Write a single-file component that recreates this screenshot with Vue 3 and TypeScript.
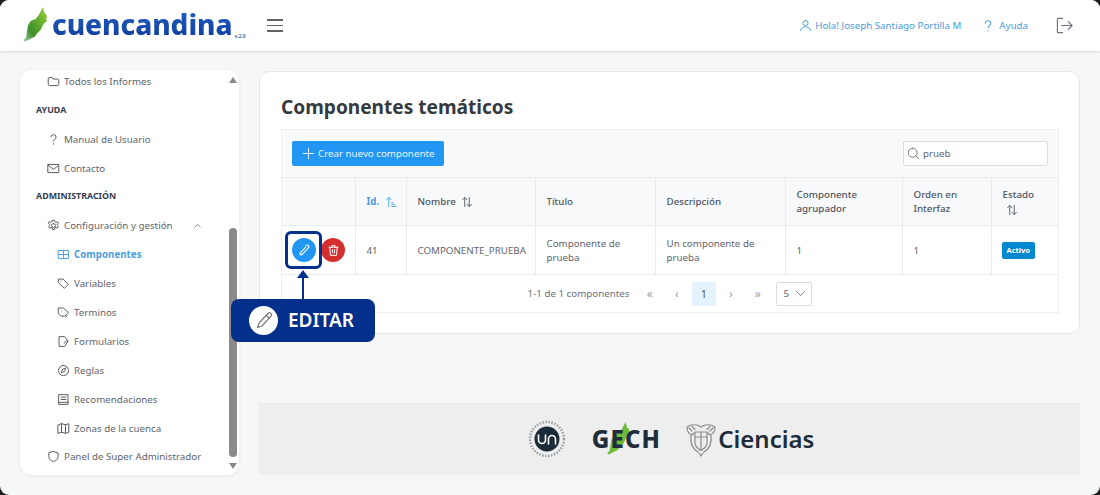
<script setup lang="ts">
const icons: Record<string, string> = {
  folder: 'M1.500 4.500a1.500 1.500 0 0 1 1.500-1.500h3l1.500 2h5.500a1.500 1.500 0 0 1 1.500 1.500v5a1.500 1.500 0 0 1-1.500 1.500H3a1.500 1.500 0 0 1-1.500-1.500z',
  question: 'M4.800 4.800A3.200 3.200 0 0 1 8 2a3.100 3.100 0 0 1 3.200 3c0 2.400-3.200 2.600-3.200 5M8 13.200v.6',
  mail: 'M1.500 3h13v10h-13zM1.500 4l6.500 5 6.500-5',
  gear: 'M8 5.600a2.400 2.400 0 1 0 0 4.800 2.400 2.400 0 0 0 0-4.800zM6.800 1.600h2.400l.4 1.800 1.500.7 1.600-.9 1.300 1.900-1.200 1.300v1.600l1.200 1.300-1.300 1.900-1.600-.9-1.500.7-.4 1.800H6.800l-.4-1.800-1.500-.7-1.600.9-1.300-1.900 1.200-1.300V6.400L1.500 5.100l1.300-1.900 1.600.9 1.500-.7z',
  table: 'M2 3h12v10H2zM2 8h12M8 3v10',
  tag: 'M2 2.500h5.500l6.500 6.500-5 5-6.500-6.500zM5 5v.01',
  tags: 'M2 2.500h6l6 5.500-4.500 4.500H5.500a2 2 0 0 1-1.400-.6L2 9.500zM5.500 6v.01M12 12l-1 1.500',
  form: 'M3 2h6.500l4 5.500-4 6.500H3zM13 7.500c-2.500-.5-3.500.5-4 2.500',
  compass: 'M8 1.800a6.200 6.200 0 1 0 0 12.400A6.200 6.200 0 0 0 8 1.800zM10.800 5.200L9.200 9.200 5.200 10.800 6.800 6.800z',
  book: 'M2.500 2h11v12h-11zM2.500 11.500h11M5 5h6M5 8h6',
  map: 'M1.500 3.500L5.500 2l5 1.500 4-1.500v10.500l-4 1.500-5-1.500-4 1.500zM5.500 2v10.500M10.500 3.500V14',
  shield: 'M8 1.800l5.700 2v4.200c0 3.200-2.500 5.200-5.700 6.200-3.200-1-5.700-3-5.700-6.200V3.800z',
}

const navItems = [
  { label: 'Todos los Informes', icon: 'folder', kind: 'item' },
  { label: 'AYUDA', icon: '', kind: 'section' },
  { label: 'Manual de Usuario', icon: 'question', kind: 'item' },
  { label: 'Contacto', icon: 'mail', kind: 'item' },
  { label: 'ADMINISTRACIÓN', icon: '', kind: 'section' },
  { label: 'Configuración y gestión', icon: 'gear', kind: 'group' },
  { label: 'Componentes', icon: 'table', kind: 'sub active' },
  { label: 'Variables', icon: 'tag', kind: 'sub' },
  { label: 'Terminos', icon: 'tags', kind: 'sub' },
  { label: 'Formularios', icon: 'form', kind: 'sub' },
  { label: 'Reglas', icon: 'compass', kind: 'sub' },
  { label: 'Recomendaciones', icon: 'book', kind: 'sub' },
  { label: 'Zonas de la cuenca', icon: 'map', kind: 'sub' },
  { label: 'Panel de Super Administrador', icon: 'shield', kind: 'item' },
]
</script>

<template>
  <div class="page">
    <header class="topbar">
      <div class="logo">
        <svg class="leaf" width="26" height="36" viewBox="0 0 26 36">
          <defs>
            <linearGradient id="leafg" x1="0" y1="1" x2="1" y2="0">
              <stop offset="0" stop-color="#9fd0b0" />
              <stop offset="0.3" stop-color="#3f8f2a" />
              <stop offset="0.7" stop-color="#6fb52f" />
              <stop offset="1" stop-color="#a2cf4a" />
            </linearGradient>
          </defs>
          <path d="M20 0l1.500 6 2 1.500.5 3-1 1.500 1 2-3.500 3-3 6-3.500 3.500-2 3-5 2.500-5 2.500-1.500-1.500 2.500-2.500 1-6 1-6 2.500-4.500 5-2 3-3.500z" fill="url(#leafg)" />
        </svg>
        <span class="logo-text">cuencandina</span>
        <span class="logo-ver">v.2.0</span>
      </div>
      <button class="burger" aria-label="menu"><i></i><i></i><i></i></button>
      <div class="top-links">
        <a class="top-link">
          <svg width="13" height="13" viewBox="0 0 16 16"><path d="M8 1.800a3.200 3.200 0 1 0 0 6.400 3.200 3.200 0 0 0 0-6.400zM1.800 14.200c.5-3 3-4.500 6.200-4.500s5.700 1.500 6.200 4.500" /></svg>
          Hola! Joseph Santiago Portilla M
        </a>
        <a class="top-link help">
          <svg width="14" height="14" viewBox="0 0 16 16"><path :d="icons.question" /></svg>
          Ayuda
        </a>
        <svg class="logout" width="19" height="19" viewBox="0 0 20 20"><path d="M8 2.500H3.500a1 1 0 0 0-1 1v13a1 1 0 0 0 1 1H8M7 10h11M14 6l4 4-4 4" /></svg>
      </div>
    </header>

    <div class="body">
      <aside class="sidebar">
        <div v-for="n in navItems" :key="n.label" class="nav" :class="n.kind">
          <svg v-if="n.icon" width="13" height="13" viewBox="0 0 16 16"><path :d="icons[n.icon]" /></svg>
          <span>{{ n.label }}</span>
          <svg v-if="n.kind === 'group'" class="chev" width="9" height="9" viewBox="0 0 16 16"><path d="M3 11l5-5 5 5" /></svg>
        </div>
        <div class="scroll">
          <i class="up"></i>
          <i class="thumb"></i>
          <i class="down"></i>
        </div>
      </aside>

      <main class="main">
        <section class="card">
          <h1>Componentes temáticos</h1>
          <div class="tbl">
            <div class="toolbar">
              <button class="create">
                <svg width="13" height="13" viewBox="0 0 16 16"><path d="M8 1.500v13M1.500 8h13" /></svg>
                Crear nuevo componente
              </button>
              <div class="search">
                <svg width="13" height="13" viewBox="0 0 16 16"><path d="M7 1.500a5.500 5.500 0 1 0 0 11 5.500 5.500 0 0 0 0-11zM11 11l3.500 3.500" /></svg>
                <span>prueb</span>
              </div>
            </div>
            <table>
              <colgroup>
                <col style="width:73px" /><col style="width:51px" /><col style="width:129px" /><col style="width:120px" />
                <col style="width:130px" /><col style="width:117px" /><col style="width:89px" /><col style="width:67px" />
              </colgroup>
              <thead>
                <tr>
                  <th></th>
                  <th class="sorted">Id. <svg class="sort" width="12" height="12" viewBox="0 0 16 16"><path d="M5 14V2M2 5l3-3 3 3M9 9h2M9 11.500h4M9 14h6" /></svg></th>
                  <th>Nombre <svg class="sort" width="12" height="12" viewBox="0 0 16 16"><path d="M5 14V2M2 5l3-3 3 3M11 2v12M8 11l3 3 3-3" /></svg></th>
                  <th>Título</th>
                  <th>Descripción</th>
                  <th>Componente agrupador</th>
                  <th>Orden en Interfaz</th>
                  <th>Estado <svg class="sort block" width="12" height="12" viewBox="0 0 16 16"><path d="M5 14V2M2 5l3-3 3 3M11 2v12M8 11l3 3 3-3" /></svg></th>
                </tr>
              </thead>
              <tbody>
                <tr>
                  <td class="actions">
                    <span class="round edit">
                      <svg width="14" height="14" viewBox="0 0 16 16"><path d="M10.200 2.800a2 2 0 0 1 3 2.600l-7.200 7.600a1.400 1.400 0 0 1-2.200-1.800l6.400-6.800" /></svg>
                    </span>
                    <span class="round del">
                      <svg width="13" height="13" viewBox="0 0 16 16"><path d="M2.500 4h11M6 4V2h4v2M3.500 4l.7 10h7.600l.7-10M6.700 7v4M9.300 7v4" /></svg>
                    </span>
                  </td>
                  <td>41</td>
                  <td>COMPONENTE_PRUEBA</td>
                  <td>Componente de prueba</td>
                  <td>Un componente de prueba</td>
                  <td>1</td>
                  <td>1</td>
                  <td><span class="badge">Activo</span></td>
                </tr>
              </tbody>
            </table>
            <div class="pager">
              <span class="count">1-1 de 1 componentes</span>
              <span class="pg">«</span>
              <span class="pg">‹</span>
              <span class="pg current">1</span>
              <span class="pg">›</span>
              <span class="pg">»</span>
              <span class="size">5
                <svg width="11" height="11" viewBox="0 0 16 16"><path d="M2 5l6 6 6-6" /></svg>
              </span>
            </div>
          </div>
        </section>

        <footer class="foot">
          <div class="un">
            <svg width="38" height="38" viewBox="0 0 38 38">
              <circle cx="19" cy="19" r="17" fill="none" stroke="#9aa0a5" stroke-width="2.500" stroke-dasharray="1.500 1.500" />
              <circle cx="19" cy="19" r="12.500" fill="#1c2b3a" />
              <path d="M10.500 15v5a3.500 3.500 0 0 0 7 0v-5M20.500 24v-5a3.500 3.500 0 0 1 7 0v5" />
            </svg>
          </div>
          <div class="gech">
            <svg class="gech-leaf" width="26" height="34" viewBox="0 0 26 36"><path d="M20 0l1.500 6 2 1.500.5 3-1 1.500 1 2-3.500 3-3 6-3.500 3.500-2 3-5 2.500-5 2.500-1.500-1.500 2.500-2.500 1-6 1-6 2.500-4.500 5-2 3-3.500z" /></svg>
            <span>GECH</span>
          </div>
          <div class="ciencias">
            <svg width="32" height="35" viewBox="0 0 32 35">
              <path d="M16 5c-4-3-10-3-14 0 0 4 2 7 5 8l2-2M16 5c4-3 10-3 14 0 0 4-2 7-5 8l-2-2M4 6l3 3M7 4.500l3 3M28 6l-3 3M25 4.500l-3 3" />
              <path d="M10 10h12v11c0 3-2.500 5.500-6 7.500-3.500-2-6-4.500-6-7.500z" />
              <path d="M16 10v18M10 15h12M6 13c-1 8 2 14 7 17M26 13c1 8-2 14-7 17M14 31l2 3 2-3" />
            </svg>
            <span>Ciencias</span>
          </div>
        </footer>
      </main>
    </div>

    <!-- guia sobre la captura -->
    <div class="focus-box"></div>
    <div class="arrow"></div>
    <div class="callout">
      <span class="callout-ico">
        <svg width="20" height="20" viewBox="0 0 20 20"><path d="M14 3.500a2 2 0 0 1 3 2.700L8 16l-4.500 1.500L5 13zM12.500 5.500l2.800 2.700" /></svg>
      </span>
      <span>EDITAR</span>
    </div>
  </div>
</template>

<style>
html, body {
  margin: 0;
  background: #1d1d1d;
}
</style>

<style scoped>
.page {
  position: relative;
  width: 1100px;
  height: 495px;
  overflow: hidden;
  border-radius: 9px;
  background: #f6f7f9;
  font-family: "Noto Sans", "Open Sans", sans-serif;
  font-size: 9.75px;
  color: #5f656d;
}
svg path {
  fill: none;
  stroke: currentColor;
  stroke-width: 1.200;
  stroke-linecap: round;
  stroke-linejoin: round;
}
.topbar {
  height: 51px;
  display: flex;
  align-items: center;
  background: #fff;
  box-shadow: 0 1px 3px rgba(0, 0, 0, 0.12);
  padding: 0 26px 0 22px;
  box-sizing: border-box;
}
.logo {
  display: flex;
  width: 245px;
  height: 51px;
  align-items: center;
}
.leaf {
  margin: -2px 3px 0 1px;
  flex: none;
}
.leaf path {
  stroke: none;
  fill: url(#leafg);
}
.logo-text {
  font-size: 28px;
  font-weight: 800;
  letter-spacing: -0.050px;
  background: linear-gradient(#1f5fc4, #123f9c);
  -webkit-background-clip: text;
  background-clip: text;
  color: transparent;
  line-height: 1;
  margin-top: -3px;
}
.logo-ver {
  font-size: 5px;
  font-weight: 700;
  color: #4a74b8;
  margin: 20px 0 0 2px;
}
.burger {
  border: 0;
  background: none;
  padding: 0;
  width: 16px;
  display: flex;
  flex-direction: column;
  gap: 4px;
}
.burger i {
  display: block;
  height: 1.500px;
  background: #5f6368;
}
.top-links {
  margin-left: auto;
  display: flex;
  align-items: center;
}
.top-link {
  display: flex;
  align-items: center;
  gap: 3px;
  color: #4a9ede;
}
.help {
  margin-left: 20px;
  gap: 4px;
}
.logout {
  margin-left: 27px;
  color: #6b7280;
}
.body {
  display: flex;
  align-items: flex-start;
  gap: 20px;
  padding: 19px 20px 0;
}
.sidebar {
  position: relative;
  width: 219px;
  height: 405px;
  flex: none;
  background: #fff;
  border-radius: 12px;
  box-shadow: 0 1px 4px rgba(0, 0, 0, 0.07);
}
.nav {
  display: flex;
  align-items: center;
  height: 28.850px;
  box-sizing: border-box;
  color: #5f656d;
}
.nav:first-child {
  margin-top: -2.500px;
}
.nav > svg:first-child {
  margin-right: 4px;
  flex: none;
  color: #55595f;
}
.nav.item {
  padding-left: 27px;
}
.nav.group {
  padding: 0 0 2px 27px;
}
.nav.sub {
  padding-left: 37px;
}
.nav.section {
  padding: 0 0 3px 16px;
  font-size: 8.900px;
  font-weight: 700;
  color: #374151;
}
.nav.active {
  color: #4a9ede;
  font-weight: 700;
}
.nav.active > svg:first-child {
  color: #4a9ede;
}
.chev {
  margin-left: 20px;
  color: #555;
}
.scroll {
  position: absolute;
  right: 2px;
  top: 0;
  bottom: 0;
  width: 8px;
}
.up, .down {
  position: absolute;
  left: 0;
  width: 0;
  height: 0;
  border-left: 4px solid transparent;
  border-right: 4px solid transparent;
}
.up {
  top: 7px;
  border-bottom: 6px solid #888;
}
.down {
  bottom: 6px;
  border-top: 6px solid #888;
}
.thumb {
  position: absolute;
  left: 0;
  right: 0;
  top: 158px;
  height: 229px;
  background: #8a8a8a;
  border-radius: 4px;
}
.main {
  width: 821px;
  flex: none;
}
.card {
  height: 263px;
  box-sizing: border-box;
  padding: 21px 21px 0;
  margin-top: 1px;
  background: #fff;
  border: 1px solid #e6e8eb;
  border-radius: 10px;
}
h1 {
  margin: 0;
  font-size: 19.100px;
  line-height: 28px;
  font-weight: 700;
  color: #343a40;
  height: 36px;
}
.tbl {
  width: 778px;
  border: 1px solid #edeff2;
  box-sizing: border-box;
}
.toolbar {
  height: 47px;
  display: flex;
  align-items: center;
  justify-content: space-between;
  padding: 0 10px;
  background: #f8f9fa;
  box-sizing: border-box;
}
.create {
  height: 25px;
  width: 152px;
  border: 0;
  border-radius: 2px;
  background: #2196f3;
  color: #e8f4fe;
  font: inherit;
  white-space: nowrap;
  display: flex;
  align-items: center;
  gap: 3px;
  padding: 0 0 0 10px;
}
.search {
  width: 145px;
  height: 25px;
  background: #fff;
  border: 1px solid #d9dce0;
  border-radius: 2px;
  box-sizing: border-box;
  display: flex;
  align-items: center;
  gap: 3px;
  padding-left: 3px;
  color: #5f656d;
}
.search svg {
  color: #6c757d;
}
table {
  width: 776px;
  table-layout: fixed;
  border-collapse: collapse;
}
th, td {
  border: 1px solid #e9ecef;
  border-left: 0;
  padding: 1px 9px 0 11px;
  text-align: left;
  line-height: 14px;
  color: #5f656d;
  font-weight: 400;
}
th:last-child, td:last-child {
  border-right: 0;
}
thead tr {
  height: 48px;
}
tbody tr {
  height: 49px;
}
th {
  background: #f8f9fa;
  font-weight: 500;
  color: #4b5563;
}
th.sorted {
  color: #4a9ede;
  font-weight: 700;
  white-space: nowrap;
}
.sort {
  margin-left: 3px;
  vertical-align: -3px;
}
.sort.block {
  display: block;
  margin: 2px 0 0 3px;
}
td.actions {
  padding: 0 0 0 10px;
  white-space: nowrap;
}
.round {
  display: inline-flex;
  align-items: center;
  justify-content: center;
  width: 24px;
  height: 24px;
  border-radius: 50%;
  vertical-align: middle;
  color: #fff;
}
.edit {
  background: #2196f3;
}
.del {
  background: #d32f2f;
  margin-left: 5px;
}
.badge {
  display: inline-block;
  background: #0288d1;
  color: #fff;
  font-size: 7.500px;
  font-weight: 700;
  line-height: 17px;
  padding: 0 5px;
  border-radius: 2px;
  margin-left: -1px;
}
.pager {
  height: 37px;
  display: flex;
  align-items: center;
  justify-content: center;
}
.count {
  margin-right: 7px;
  color: #6b7280;
}
.pg {
  width: 24px;
  height: 24px;
  margin: 0 1.500px;
  display: flex;
  align-items: center;
  justify-content: center;
  color: #9aa1a9;
  font-size: 12px;
}
.pg.current {
  background: #e3f2fd;
  color: #495057;
  font-size: 10px;
}
.size {
  width: 36px;
  height: 24px;
  margin-left: 5px;
  border: 1px solid #d9dce0;
  border-radius: 2px;
  box-sizing: border-box;
  display: flex;
  align-items: center;
  gap: 6px;
  padding-left: 6px;
}
.foot {
  margin-top: 69px;
  height: 72px;
  background: #eeeeee;
  display: flex;
  align-items: center;
  justify-content: center;
  padding-left: 3px;
  box-sizing: border-box;
}
.un {
  display: flex;
  margin-right: 26px;
}
.un svg path {
  stroke: #fff;
  stroke-width: 1.600;
}
.gech {
  position: relative;
  font-size: 24px;
  font-weight: 800;
  color: #1f2d3a;
  letter-spacing: 1.200px;
  margin-right: 24px;
  line-height: 1;
}
.gech span {
  position: relative;
}
.gech-leaf {
  position: absolute;
  left: 14px;
  top: -5px;
}
.gech-leaf path {
  stroke: none;
  fill: #6cbb3c;
}
.ciencias {
  display: flex;
  align-items: center;
  gap: 1px;
  font-size: 24px;
  font-weight: 600;
  color: #1f2d3a;
  line-height: 1;
}
.ciencias svg path {
  stroke: #8a8c8e;
}
.focus-box {
  position: absolute;
  left: 285px;
  top: 231px;
  width: 37px;
  height: 38px;
  box-sizing: border-box;
  border: 3px solid #03308a;
  border-radius: 6px;
}
.arrow {
  position: absolute;
  left: 302px;
  top: 277px;
  width: 2px;
  height: 23px;
  background: #03308a;
}
.arrow::before {
  content: "";
  position: absolute;
  left: -5px;
  top: -7px;
  border-left: 6px solid transparent;
  border-right: 6px solid transparent;
  border-bottom: 8px solid #03308a;
}
.callout {
  position: absolute;
  left: 231px;
  top: 299px;
  width: 144px;
  height: 43px;
  box-sizing: border-box;
  padding: 0 0 1px 18px;
  display: flex;
  align-items: center;
  gap: 10px;
  background: #03308a;
  border-radius: 8px;
  color: #fff;
  font-size: 19px;
  font-weight: 600;
}
.callout-ico {
  width: 29px;
  height: 29px;
  border-radius: 50%;
  background: #fff;
  color: #777;
  display: flex;
  align-items: center;
  justify-content: center;
}
</style>
